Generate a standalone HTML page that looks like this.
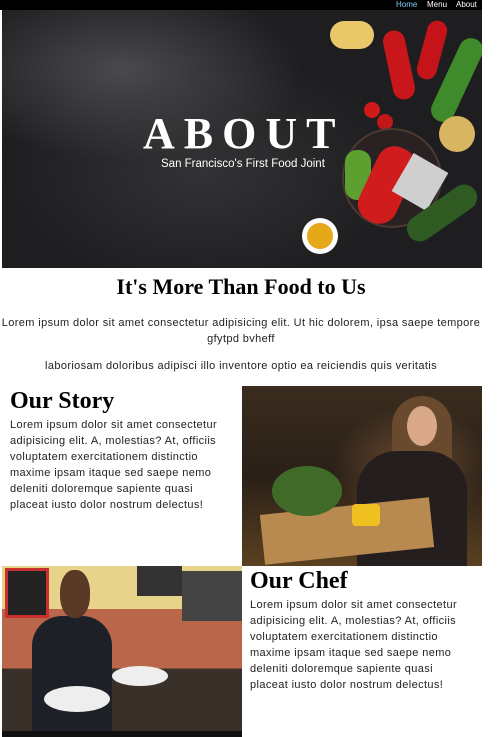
<!DOCTYPE html>
<html><head><meta charset="utf-8"><style>
*{margin:0;padding:0;box-sizing:border-box}
body{width:499px;height:737px;overflow:hidden;background:#fff;font-family:"Liberation Sans",sans-serif;color:#222;position:relative}
.nav{position:absolute;left:0;top:0;width:482px;height:10px;background:#000}
.nav span{position:absolute;top:0;font-size:8px;line-height:10px;color:#fff}
.hero{position:absolute;left:2px;top:10px;width:480px;height:258px;overflow:hidden;
background:radial-gradient(ellipse 180px 90px at 120px 60px,#4a4a4e,transparent),radial-gradient(ellipse 200px 120px at 200px 160px,#333336,transparent),#1e1e20}
.abs{position:absolute}
.t{position:absolute;font-size:11px;line-height:16px;color:#222;white-space:nowrap;letter-spacing:0.38px}
h1{position:absolute;font-family:"Liberation Serif",serif;font-weight:bold;color:#000}
</style></head><body>
<div class="nav"><span style="left:396px;color:#7fd0ff">Home</span><span style="left:427px">Menu</span><span style="left:456px">About</span></div>
<div class="hero">
<div class="abs" style="left:328px;top:11px;width:44px;height:28px;border-radius:14px;background:#e9c86a"></div>
<div class="abs" style="left:386px;top:20px;width:22px;height:70px;border-radius:11px;background:#c8161a;transform:rotate(-12deg)"></div>
<div class="abs" style="left:420px;top:10px;width:20px;height:60px;border-radius:10px;background:#c4141a;transform:rotate(15deg)"></div>
<div class="abs" style="left:443px;top:25px;width:24px;height:90px;border-radius:12px;background:#3f8a2a;transform:rotate(25deg)"></div>
<div class="abs" style="left:362px;top:92px;width:16px;height:16px;border-radius:50%;background:#d01a1a"></div>
<div class="abs" style="left:375px;top:104px;width:16px;height:16px;border-radius:50%;background:#c01818"></div>
<div class="abs" style="left:437px;top:106px;width:36px;height:36px;border-radius:50%;background:#d8b560"></div>
<div class="abs" style="left:340px;top:118px;width:100px;height:100px;border-radius:50%;border:2px solid #4a3a30;background:#2a2222"></div>
<div class="abs" style="left:343px;top:140px;width:26px;height:50px;border-radius:12px;background:#5ea030"></div>
<div class="abs" style="left:365px;top:135px;width:40px;height:80px;border-radius:18px;background:#d01c1c;transform:rotate(25deg)"></div>
<div class="abs" style="left:398px;top:150px;width:40px;height:44px;background:#cfcfcf;transform:rotate(30deg)"></div>
<div class="abs" style="left:300px;top:208px;width:36px;height:36px;border-radius:50%;background:#fff"></div>
<div class="abs" style="left:305px;top:213px;width:26px;height:26px;border-radius:50%;background:#e6a718"></div>
<div class="abs" style="left:400px;top:190px;width:80px;height:26px;border-radius:13px;background:#2f5a22;transform:rotate(-35deg)"></div>
<div class="abs" style="left:141px;top:101px;white-space:nowrap;font-family:'Liberation Serif',serif;font-weight:bold;font-size:44px;letter-spacing:9px;color:#fff;line-height:46px">ABOUT</div>
<div class="abs" style="left:159px;top:148px;font-size:11.5px;color:#fff;white-space:nowrap">San Francisco's First Food Joint</div>
</div>
<h1 style="left:0;width:482px;text-align:center;top:273px;font-size:22px;line-height:28px">It's More Than Food to Us</h1>
<div class="t" style="left:0;width:482px;text-align:center;top:315px">Lorem ipsum dolor sit amet consectetur adipisicing elit. Ut hic dolorem, ipsa saepe tempore<br>gfytpd bvheff</div>
<div class="t" style="left:0;width:482px;text-align:center;top:358px">laboriosam doloribus adipisci illo inventore optio ea reiciendis quis veritatis</div>
<h1 style="left:10px;top:386px;font-size:24px;line-height:30px">Our Story</h1>
<div class="t" style="left:10px;top:417px">Lorem ipsum dolor sit amet consectetur<br>adipisicing elit. A, molestias? At, officiis<br>voluptatem exercitationem distinctio<br>maxime ipsam itaque sed saepe nemo<br>deleniti doloremque sapiente quasi<br>placeat iusto dolor nostrum delectus!</div>
<div class="abs" style="left:242px;top:386px;width:240px;height:180px;overflow:hidden;background:radial-gradient(ellipse 80px 60px at 170px 80px,#6a4a30,transparent),linear-gradient(#3a2c1e,#2a2018 50%,#5a4020)">
<div class="abs" style="left:150px;top:10px;width:60px;height:150px;border-radius:30px;background:#6a4a2e"></div>
<div class="abs" style="left:115px;top:65px;width:110px;height:120px;border-radius:40px 40px 0 0;background:#241e1e"></div>
<div class="abs" style="left:165px;top:20px;width:30px;height:40px;border-radius:50%;background:#d9a888"></div>
<div class="abs" style="left:20px;top:120px;width:170px;height:50px;background:#b88a50;transform:rotate(-6deg)"></div>
<div class="abs" style="left:30px;top:80px;width:70px;height:50px;border-radius:50%;background:#3f6a28"></div>
<div class="abs" style="left:110px;top:118px;width:28px;height:22px;border-radius:4px;background:#f0c020"></div>
</div>
<div class="abs" style="left:2px;top:566px;width:240px;height:171px;overflow:hidden;background:linear-gradient(#e7d48a 0 25%,#b9664a 25% 60%,#3a302a 60%)">
<div class="abs" style="left:3px;top:2px;width:44px;height:50px;background:#c83030"></div>
<div class="abs" style="left:6px;top:5px;width:38px;height:44px;background:#222"></div>
<div class="abs" style="left:180px;top:5px;width:60px;height:50px;background:#444"></div>
<div class="abs" style="left:135px;top:0px;width:45px;height:30px;background:#333"></div>
<div class="abs" style="left:30px;top:50px;width:80px;height:121px;border-radius:30px 30px 0 0;background:#1e2028"></div>
<div class="abs" style="left:58px;top:4px;width:30px;height:48px;border-radius:45%;background:#5a3a26"></div>
<div class="abs" style="left:42px;top:120px;width:66px;height:26px;border-radius:50%;background:#eee"></div>
<div class="abs" style="left:110px;top:100px;width:56px;height:20px;border-radius:50%;background:#eee"></div>
<div class="abs" style="left:0;top:165px;width:240px;height:6px;background:#111"></div>
</div>
<h1 style="left:250px;top:566px;font-size:24px;line-height:30px">Our Chef</h1>
<div class="t" style="left:250px;top:597px">Lorem ipsum dolor sit amet consectetur<br>adipisicing elit. A, molestias? At, officiis<br>voluptatem exercitationem distinctio<br>maxime ipsam itaque sed saepe nemo<br>deleniti doloremque sapiente quasi<br>placeat iusto dolor nostrum delectus!</div>
</body></html>
